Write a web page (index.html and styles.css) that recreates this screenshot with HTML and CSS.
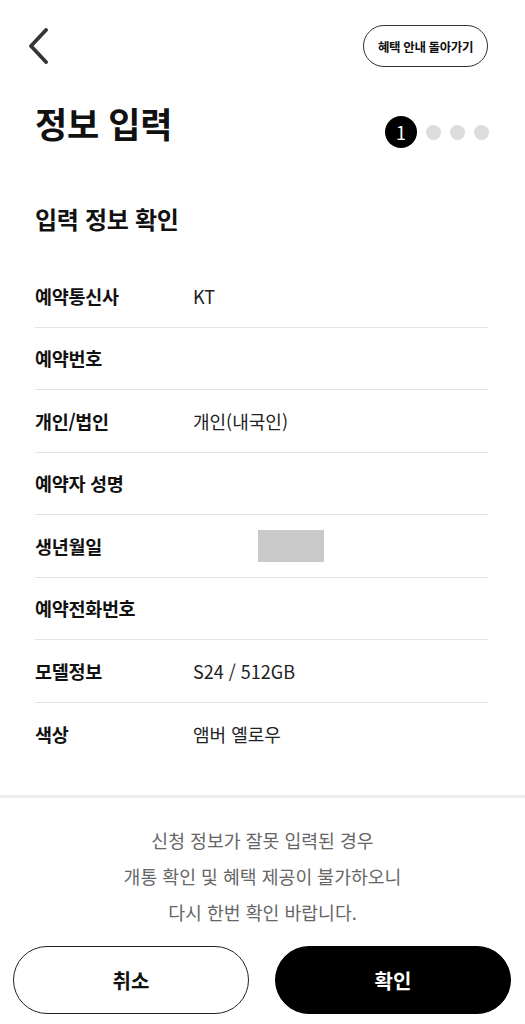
FILE: index.html
```html
<!DOCTYPE html>
<html lang="ko">
<head>
<meta charset="utf-8">
<meta name="viewport" content="width=device-width, initial-scale=1">
<title>정보 입력</title>
<link rel="stylesheet" href="styles.css">
</head>
<body>
<div class="page">
  <header class="topbar">
    <button class="back" aria-label="뒤로">
      <svg width="24" height="36" viewBox="0 0 24 36"><path d="M19 2 L4 18 L19 34" fill="none" stroke="#353535" stroke-width="3.8" stroke-linecap="round" stroke-linejoin="round"/></svg>
    </button>
    <button class="pill">혜택 안내 돌아가기</button>
  </header>

  <div class="title-row">
    <h1 class="title">정보 입력</h1>
    <div class="steps">
      <span class="step active">1</span>
      <span class="step"></span>
      <span class="step"></span>
      <span class="step"></span>
    </div>
  </div>

  <h2 class="section">입력 정보 확인</h2>

  <dl class="info">
    <div class="row"><dt>예약통신사</dt><dd>KT</dd></div>
    <div class="row"><dt>예약번호</dt><dd></dd></div>
    <div class="row"><dt>개인/법인</dt><dd>개인(내국인)</dd></div>
    <div class="row"><dt>예약자 성명</dt><dd></dd></div>
    <div class="row"><dt>생년월일</dt><dd><span class="mask"></span></dd></div>
    <div class="row"><dt>예약전화번호</dt><dd></dd></div>
    <div class="row"><dt>모델정보</dt><dd>S24 / 512GB</dd></div>
    <div class="row"><dt>색상</dt><dd>앰버 옐로우</dd></div>
  </dl>

  <div class="divider"></div>

  <p class="notice">신청 정보가 잘못 입력된 경우<br>개통 확인 및 혜택 제공이 불가하오니<br>다시 한번 확인 바랍니다.</p>

  <div class="actions">
    <button class="btn cancel">취소</button>
    <button class="btn confirm">확인</button>
  </div>
</div>
</body>
</html>
```

FILE: styles.css
```css
* { box-sizing: border-box; }
html, body { margin: 0; padding: 0; background: #fff; }
body {
  font-family: "Noto Sans CJK KR", "Noto Sans", sans-serif;
  color: #111;
}
.page { width: 525px; }

.topbar {
  display: flex;
  justify-content: space-between;
  align-items: center;
  padding: 25px 37px 0 27px;
  height: 67px;
}
.back {
  border: 0;
  background: none;
  padding: 0;
  width: 24px;
  height: 36px;
  display: flex;
}
.pill {
  height: 42px;
  padding: 0 14px;
  border: 1.5px solid #333;
  border-radius: 21px;
  background: #fff;
  font-family: inherit;
  font-size: 12.5px;
  font-weight: 700;
  color: #111;
  letter-spacing: -0.4px;
}

.title-row {
  display: flex;
  justify-content: space-between;
  align-items: center;
  padding: 0 35px 0 35px;
  margin-top: 31px;
}
.title {
  margin: 0;
  font-size: 35px;
  font-weight: 700;
  line-height: 44px;
  letter-spacing: -0.3px;
}
.steps {
  display: flex;
  align-items: center;
  gap: 9px;
  margin-top: 18px;
  margin-right: 1px;
}
.step {
  width: 15px;
  height: 15px;
  border-radius: 50%;
  background: #dcdcdc;
}
.step.active {
  width: 32px;
  height: 32px;
  background: #000;
  color: #fff;
  font-size: 18px;
  line-height: 32px;
  text-align: center;
}

.section {
  margin: 56px 0 0 0;
  padding: 0 35px;
  font-size: 24px;
  font-weight: 700;
  line-height: 30px;
  letter-spacing: -0.3px;
}

.info {
  margin: 31px 37px 0 35px;
  padding: 0;
}
.row {
  display: flex;
  align-items: center;
  height: 62.5px;
  border-bottom: 1px solid #e4e4e4;
}
.row:last-child { border-bottom: 0; }
.row dt {
  width: 158px;
  font-size: 18.5px;
  font-weight: 700;
  letter-spacing: -0.3px;
}
.row dd {
  margin: 0;
  font-size: 18px;
  color: #222;
}
.mask {
  display: block;
  width: 66px;
  height: 32px;
  margin-left: 65px;
  background: #c9c9c9;
}

.divider {
  height: 3px;
  background: #ececec;
  margin-top: 30px;
}

.notice {
  margin: 24px 0 0 0;
  text-align: center;
  font-size: 18.3px;
  line-height: 36px;
  color: #666;
}

.actions {
  display: flex;
  gap: 26px;
  padding: 0 14px 0 13px;
  margin-top: 16px;
}
.btn {
  flex: 1;
  height: 68px;
  border-radius: 34px;
  font-family: inherit;
  font-size: 20px;
  font-weight: 700;
}
.cancel {
  background: #fff;
  border: 1.5px solid #222;
  color: #111;
}
.confirm {
  background: #000;
  border: 1.5px solid #000;
  color: #fff;
}
```
